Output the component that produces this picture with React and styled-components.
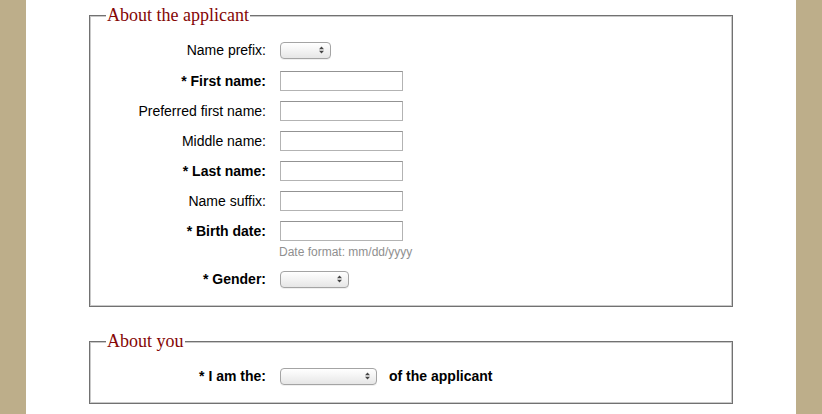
import React from 'react'
import styled, { createGlobalStyle } from 'styled-components'

const GlobalStyle = createGlobalStyle`
  html, body {
    margin: 0;
    padding: 0;
    background: #bdae8a;
  }
  body {
    font-family: 'Liberation Sans', Arial, Helvetica, sans-serif;
    font-size: 14px;
    color: #000;
  }
`

// white column between the beige margins
const Sheet = styled.div`
  width: 770px;
  min-height: 414px;
  margin: 0 auto;
  background: #fff;
  padding: 5px 0 20px;
  box-sizing: border-box;
`

const Fieldset = styled.fieldset`
  margin: 0 63px ${(p) => p.$gap || 0}px;
  padding: 0;
  min-width: 0;
  border: 1px solid #717171;
  box-shadow: inset 1px 1px 0 #c9c9c9, inset -1px -1px 0 #c9c9c9;
`

const Legend = styled.legend`
  margin-left: 16px;
  padding: 0 1px;
  background: #fff;
  font-family: 'Liberation Serif', 'Times New Roman', serif;
  font-size: 18px;
  color: #850606;
`

const Body = styled.div`
  padding: ${(p) => p.$top}px 0 ${(p) => p.$bottom}px;
`

const Row = styled.div`
  display: grid;
  grid-template-columns: 176px auto;
  column-gap: 14px;
  align-items: ${(p) => p.$align || 'center'};
  height: ${(p) => p.$h || 30}px;
`

const Label = styled.label`
  text-align: right;
  font-weight: ${(p) => (p.$required ? 'bold' : 'normal')};
  line-height: 16px;
`

const Cell = styled.div`
  display: flex;
  align-items: center;
  gap: 12px;
`

const TextInput = styled.input`
  box-sizing: border-box;
  width: 123px;
  height: 20px;
  margin: 0;
  padding: 1px 3px;
  border: 1px solid #b3b3b3;
  border-top-color: #939393;
  border-radius: 0;
  background: #fff;
  font: inherit;
`

const SelectWrap = styled.span`
  position: relative;
  display: inline-block;
  width: ${(p) => p.$w}px;
  height: 17px;
`

const Select = styled.select`
  appearance: none;
  -webkit-appearance: none;
  box-sizing: border-box;
  width: 100%;
  height: 100%;
  margin: 0;
  padding: 0 14px 0 6px;
  border: 1px solid #a4a4a4;
  border-radius: 4px;
  background: linear-gradient(#ffffff, #f3f3f3 50%, #e6e6e6);
  box-shadow: 0 1px 0 rgba(0, 0, 0, 0.06);
  font: 11px 'Liberation Sans', Arial, sans-serif;
  color: #000;
`

// the little up/down arrows over the select
const Arrows = styled.svg`
  position: absolute;
  right: 7px;
  top: 50%;
  margin-top: -4px;
  pointer-events: none;
`

const Hint = styled.div`
  font-size: 12px;
  line-height: 14px;
  color: #8f8f8f;
  margin: -1px 0 0 -1px;
`

const Trailing = styled.span`
  font-weight: bold;
`

function FakeSelect({ width }) {
  return (
    <SelectWrap $w={width}>
      <Select defaultValue="">
        <option value=""></option>
      </Select>
      <Arrows width="5" height="8" viewBox="0 0 5 8">
        <polygon points="2.5,0.5 5,3.2 0,3.2" fill="#444" />
        <polygon points="0,4.8 5,4.8 2.5,7.5" fill="#444" />
      </Arrows>
    </SelectWrap>
  )
}

function TextRow({ label, required }) {
  return (
    <Row>
      <Label $required={required}>{required ? '* ' : ''}{label}:</Label>
      <Cell><TextInput type="text" /></Cell>
    </Row>
  )
}

export default function App() {
  return (
    <>
      <GlobalStyle />
      <Sheet>
        <Fieldset $gap={24}>
          <Legend>About the applicant</Legend>
          <Body $top={8} $bottom={12}>
            <Row $h={32}>
              <Label>Name prefix:</Label>
              <Cell><FakeSelect width={51} /></Cell>
            </Row>
            <TextRow label="First name" required />
            <TextRow label="Preferred first name" />
            <TextRow label="Middle name" />
            <TextRow label="Last name" required />
            <TextRow label="Name suffix" />
            <TextRow label="Birth date" required />
            <Row $h={18} $align="start">
              <span />
              <Hint>Date format: mm/dd/yyyy</Hint>
            </Row>
            <Row>
              <Label $required>* Gender:</Label>
              <Cell><FakeSelect width={69} /></Cell>
            </Row>
          </Body>
        </Fieldset>

        <Fieldset>
          <Legend>About you</Legend>
          <Body $top={9} $bottom={12}>
            <Row>
              <Label $required>* I am the:</Label>
              <Cell>
                <FakeSelect width={97} />
                <Trailing>of the applicant</Trailing>
              </Cell>
            </Row>
          </Body>
        </Fieldset>
      </Sheet>
    </>
  )
}
